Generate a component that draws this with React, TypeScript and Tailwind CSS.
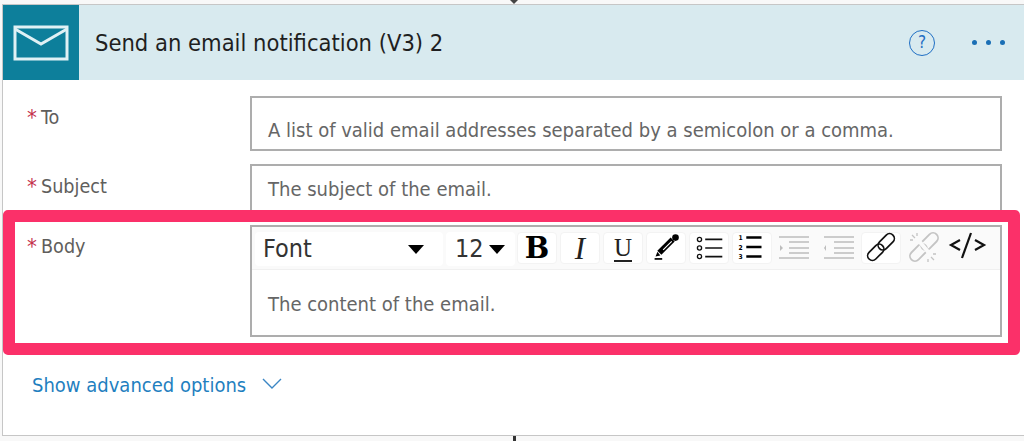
import React from "react";

const font = "font-['DejaVu_Sans_Condensed','DejaVu_Sans',sans-serif]";

function Btn({ children, plain }: { children?: React.ReactNode; plain?: boolean }) {
  return (
    <div className={`w-10 h-8 rounded-sm flex items-center justify-center shrink-0 ${plain ? "" : "bg-white border border-[#f3f3f3]"}`}>
      {children}
    </div>
  );
}

function Ic({ children }: { children: React.ReactNode }) {
  return (
    <svg width="40" height="32" viewBox="0 0 40 32" fill="none">
      {children}
    </svg>
  );
}

function Label({ text, pt }: { text: string; pt: string }) {
  return (
    <div className={`flex items-start text-[#605e5c] text-[19.6px] leading-7 ${pt}`}>
      <span className="text-[#c4314b] w-[14px] text-[22px] leading-7">*</span>
      <span>{text}</span>
    </div>
  );
}

function IndentLines({ flip }: { flip?: boolean }) {
  const a = flip ? 6 : 4;
  return (
    <Ic>
      <g stroke="#bdbdbd" strokeWidth="1.6">
        <path d={`M${a} 5H${a + 30}M${a} 26H${a + 30}`} />
        <path d={`M${a + 10} 10H${a + 30}M${a + 10} 16H${a + 30}M${a + 10} 21H${a + 30}`} />
      </g>
      {flip ? <path d={`M${a + 2} 13L${a} 16L${a + 2} 19Z`} fill="#bdbdbd" /> : <path d={`M${a + 1} 13L${a + 4} 16L${a + 1} 19Z`} fill="#bdbdbd" />}
    </Ic>
  );
}

export default function App() {
  return (
    <div className={`w-[1024px] h-[441px] bg-[#f8f8f8] overflow-hidden flex flex-col ${font}`}>
      <div className="h-1 flex justify-center pl-[4px]">
        <svg width="12" height="4" viewBox="0 0 12 4">
          <path d="M2 0H10L6 4Z" fill="#444" />
        </svg>
      </div>
      <div className="ml-[2px] h-[432px] bg-white border-l border-t border-b border-[#c6c6c6] flex flex-col">
        <div className="h-[75px] bg-[#d8eaef] flex items-center shrink-0">
          <div className="w-[76px] h-[75px] bg-[#0d7f9b] flex items-center justify-center">
            <svg width="56" height="36" viewBox="0 0 56 36" fill="none" stroke="#dff1f5" strokeWidth="3">
              <rect x="2" y="2" width="52" height="32" />
              <path d="M2 4L28 19L54 4" />
            </svg>
          </div>
          <div className="ml-4 text-[23.5px] text-[#1f1f1f] leading-8">Send an email notification (V3) 2</div>
          <div className="ml-auto flex items-center">
            <div className="w-[26px] h-[26px] rounded-full border-[1.5px] border-[#1f6fc4] text-[#1f6fc4] text-[17px] leading-none flex items-center justify-center">?</div>
            <div className="flex gap-[9px] ml-[37px] mr-[19px]">
              <div className="w-[5px] h-[5px] rounded-full bg-[#1a6fb5]" />
              <div className="w-[5px] h-[5px] rounded-full bg-[#1a6fb5]" />
              <div className="w-[5px] h-[5px] rounded-full bg-[#1a6fb5]" />
            </div>
          </div>
        </div>

        <div className="flex mt-4 pl-6 shrink-0">
          <div className="w-[223px]"><Label text="To" pt="pt-2" /></div>
          <div className="w-[752px] h-[55px] border-2 border-[#adadad] pl-4 pt-[18px] text-[20px] leading-7 text-[#666]">
            A list of valid email addresses separated by a semicolon or a comma.
          </div>
        </div>

        <div className="flex mt-[13px] pl-6 shrink-0">
          <div className="w-[223px]"><Label text="Subject" pt="pt-[9px]" /></div>
          <div className="w-[752px] h-[46px] border-2 border-b-0 border-[#adadad] pl-4 pt-[9px] text-[20px] leading-7 text-[#666]">
            The subject of the email.
          </div>
        </div>

        <div className="w-[1017px] h-[145px] border-[12px] border-[#fb3069] rounded-[5px] flex pl-3 pt-[3px] shrink-0">
          <div className="w-[223px]"><Label text="Body" pt="pt-2" /></div>
          <div className="w-[752px] h-[112px] border-2 border-[#adadad]">
            <div className="h-[43px] bg-[#fafafa] border-b border-[#f0f0f0] flex items-start pl-[3px] pt-[5px]">
              <div className="w-[188px] h-[34px] bg-white rounded-sm flex items-center pl-2 text-[25px] text-[#333] shrink-0">
                Font
                <svg className="ml-auto mr-[19px]" width="16" height="9" viewBox="0 0 16 9"><path d="M0 0H16L8 9Z" fill="#000" /></svg>
              </div>
              <div className="w-[69px] h-[34px] ml-[3px] bg-white rounded-sm flex items-center pl-[9px] text-[25px] text-[#333] shrink-0">
                12
                <svg className="ml-[5px]" width="16" height="9" viewBox="0 0 16 9"><path d="M0 0H16L8 9Z" fill="#000" /></svg>
              </div>
              <div className="flex gap-[3px] ml-[2px]">
                <Btn><span className="font-['DejaVu_Serif',serif] font-bold text-[29px] leading-none text-black">B</span></Btn>
                <Btn><span className="font-['Liberation_Serif',serif] italic text-[31px] leading-none text-[#222]">I</span></Btn>
                <Btn><span className="font-['Liberation_Serif',serif] text-[25px] leading-none text-[#222] border-b-2 border-[#222]">U</span></Btn>
                <Btn>
                  <Ic>
                    <path d="M13 21L27 7" stroke="#000" strokeWidth="6" />
                    <path d="M17 18L26 9" stroke="#fff" strokeWidth="1.2" />
                    <circle cx="30" cy="5" r="3.5" fill="#000" />
                    <path d="M11 20L9 25L14 24Z" fill="#000" />
                    <path d="M8 27.5H16" stroke="#000" strokeWidth="1.8" />
                  </Ic>
                </Btn>
                <Btn>
                  <Ic>
                    <g stroke="#111" fill="none" strokeWidth="1.4">
                      <circle cx="10" cy="7" r="2.2" />
                      <circle cx="10" cy="16" r="2.2" />
                      <circle cx="10" cy="25" r="2.2" />
                      <path d="M16 7H34M16 16H34M16 25H34" strokeWidth="1.8" />
                    </g>
                  </Ic>
                </Btn>
                <Btn>
                  <Ic>
                    <path d="M14 5H30M14 15H30M14 25H30" stroke="#000" strokeWidth="2.6" />
                    <text x="8" y="8" fontSize="7" fontWeight="700" fill="#000" textAnchor="middle">1</text>
                    <text x="8" y="18" fontSize="7" fontWeight="700" fill="#000" textAnchor="middle">2</text>
                    <text x="8" y="28" fontSize="7" fontWeight="700" fill="#000" textAnchor="middle">3</text>
                  </Ic>
                </Btn>
                <Btn plain><IndentLines /></Btn>
                <Btn plain><IndentLines flip /></Btn>
                <Btn>
                  <Ic>
                    <g stroke="#111" strokeWidth="1.8" fill="none">
                      <rect x="-10" y="-5" width="20" height="10" rx="5" transform="translate(25.5 9.5) rotate(-45)" />
                      <rect x="-10" y="-5" width="20" height="10" rx="5" transform="translate(14.5 20.5) rotate(-45)" />
                    </g>
                  </Ic>
                </Btn>
                <Btn plain>
                  <Ic>
                    <g stroke="#c4c4c4" strokeWidth="1.8" fill="none">
                      <rect x="-10" y="-5" width="20" height="10" rx="5" transform="translate(25.5 9.5) rotate(-45)" />
                      <rect x="-10" y="-5" width="20" height="10" rx="5" transform="translate(14.5 20.5) rotate(-45)" />
                    </g>
                    <path d="M15 9L25 21" stroke="#fafafa" strokeWidth="4" />
                    <path d="M8 3L11 6M13 1V4M6 8H9M27 25L30 28M24 27V30M29 22H32" stroke="#c4c4c4" strokeWidth="1.3" />
                  </Ic>
                </Btn>
                <Btn plain>
                  <Ic>
                    <path d="M13 8L4 13L13 18M28 8L37 13L28 18" stroke="#111" strokeWidth="2.2" fill="none" />
                    <path d="M24 1L15 26" stroke="#111" strokeWidth="2.2" />
                  </Ic>
                </Btn>
              </div>
            </div>
            <div className="pl-4 pt-[20px] text-[20px] leading-7 text-[#666]">The content of the email.</div>
          </div>
        </div>

        <div className="flex items-center pl-[29px] mt-[16px] text-[20px] leading-7 text-[#1f7fc0] shrink-0">
          Show advanced options
          <svg className="ml-[16px] mb-1" width="20" height="11" viewBox="0 0 20 11" fill="none" stroke="#3b86c4" strokeWidth="1.4"><path d="M1 1L10 10L19 1" /></svg>
        </div>
      </div>
      <div className="flex-1 flex justify-center pl-[5px]">
        <div className="w-[3px] h-full bg-[#333]" />
      </div>
    </div>
  );
}
